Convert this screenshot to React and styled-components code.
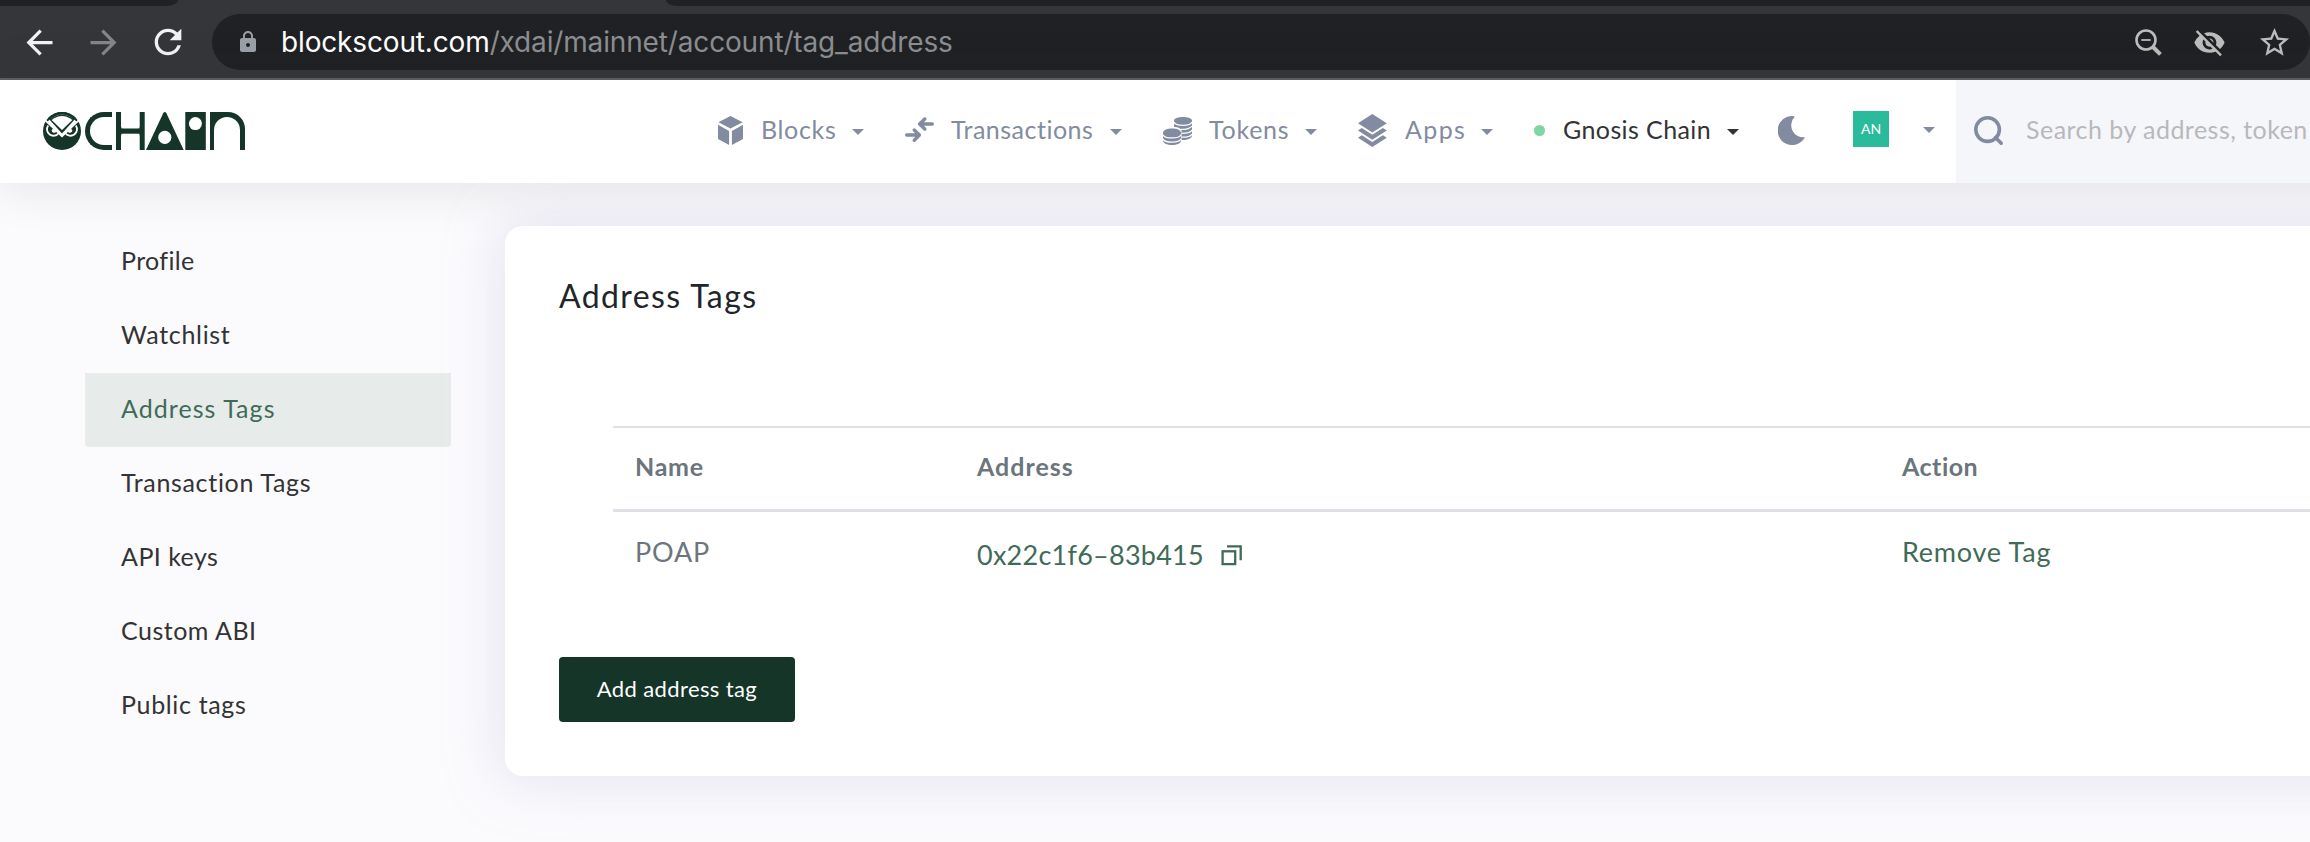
import React from 'react';
import styled, { createGlobalStyle } from 'styled-components';
import {
  MdArrowBack,
  MdArrowForward,
  MdLock,
  MdRefresh,
  MdStarBorder,
  MdVisibilityOff,
} from 'react-icons/md';

const GlobalStyle = createGlobalStyle`
  * { box-sizing: border-box; }
  body {
    margin: 0;
    background: #fbfafd;
    font-family: Lato, "Open Sans", sans-serif;
    overflow: hidden;
  }
`;

const Page = styled.div`
  width: 2310px;
  height: 842px;
  overflow: hidden;
  display: flex;
  flex-direction: column;
`;

/* Browser chrome */

const TabStrip = styled.div`
  height: 6px;
  flex: none;
  display: flex;
  background: #35363a;
`;

const StripLeft = styled.div`
  width: 178px;
  background: #202124;
  border-bottom-right-radius: 11px 6px;
`;

const StripRight = styled.div`
  flex: 1;
  margin-left: 488px;
  background: #202124;
  border-bottom-left-radius: 11px 6px;
`;

const Toolbar = styled.div`
  height: 74px;
  flex: none;
  display: flex;
  align-items: flex-start;
  padding: 8px 0 0 20px;
  background: #35363a;
  border-bottom: 2px solid #5f6064;
`;

const ToolbarButton = styled.div`
  width: 64px;
  height: 56px;
  display: flex;
  align-items: center;
  color: ${(p) => (p.$dim ? '#85868a' : '#f1f3f4')};
`;

const Omnibox = styled.div`
  width: 2098px;
  height: 56px;
  display: flex;
  align-items: center;
  padding: 0 18px 0 24px;
  border-radius: 28px;
  background: #202124;
  color: #bdbdbd;
`;

const LockSlot = styled.span`
  display: flex;
  width: 45px;
  color: #9aa0a6;
`;

const Url = styled.span`
  flex: 1;
  font: 400 28px/56px Inter, sans-serif;
  letter-spacing: -0.15px;
  color: #8c8e91;
`;

const Host = styled.span`
  color: #fff;
`;

const OmniboxActions = styled.span`
  display: flex;
  align-items: center;
  gap: 31px;
`;

const Header = styled.header`
  width: 2370px;
  height: 103px;
  flex: none;
  display: flex;
  position: relative;
  z-index: 1;
  background: #fff;
  box-shadow: 0 0 54px rgba(21, 53, 41, 0.12);
`;

const Brand = styled.div`
  width: 718px;
  flex: none;
  padding: 32px 0 0 43px;
`;

const Nav = styled.nav`
  display: flex;
  flex: none;
  align-items: center;
  padding-bottom: 6px;
`;

const NavItem = styled.div`
  width: ${(p) => p.$width}px;
  padding-right: ${(p) => p.$end}px;
  display: flex;
  align-items: center;
  color: #828ba0;
`;

const NavIcon = styled.span`
  width: ${(p) => p.$width}px;
  flex: none;
  display: flex;
  padding-top: 3px;
`;

const NavLabel = styled.span`
  flex: 1;
  width: 0;
  font-size: 25px;
  line-height: 40px;
  white-space: nowrap;
  letter-spacing: ${(p) => p.$track}px;
  color: ${(p) => (p.$dark ? '#333' : 'inherit')};
`;

const Caret = styled.span`
  width: 0;
  height: 0;
  margin-top: ${(p) => p.$drop ?? 6}px;
  border: 6.5px solid transparent;
  border-bottom: 0;
  border-top-color: ${(p) => (p.$dark ? '#333' : '#828ba0')};
`;

const StatusDot = styled.span`
  width: 11px;
  height: 11px;
  border-radius: 50%;
  background: #80d6a1;
`;

const Avatar = styled.span`
  width: 36px;
  height: 36px;
  margin-right: 34px;
  text-align: center;
  background: #29bb9c;
  color: #fff;
  font-size: 14px;
  line-height: 36px;
  letter-spacing: -0.2px;
`;

const Search = styled.div`
  flex: 1;
  display: flex;
  align-items: center;
  padding: 0 0 6px 18px;
  overflow: hidden;
  background: #f5f6fa;
  color: #828ba0;
`;

const SearchIcon = styled.span`
  width: 52px;
  flex: none;
  display: flex;
  padding-top: 4px;
`;

const Placeholder = styled.span`
  font-size: 25px;
  letter-spacing: 0.47px;
  white-space: nowrap;
  color: #b8b8ba;
`;

/* Wordmark */

const Logo = styled.div`
  width: 203px;
  height: 38px;
  display: flex;
  color: #153529;
`;

const LogoC = styled.span`
  width: 27px;
  height: 38px;
  margin-left: 4px;
  border: 5px solid #153529;
  border-right: 0;
  border-radius: 19px 0 0 19px;
`;

const LogoN = styled.span`
  width: 35px;
  height: 38px;
  margin-left: 4px;
  padding: 5px 5px 0 4px;
  background: #153529;
  border-radius: 0 17px 0 0;

  &::before {
    content: '';
    display: block;
    height: 33px;
    background: #fff;
    border-radius: 13px 13px 0 0;
  }
`;

/* Account area */

const Main = styled.main`
  flex: 1;
  display: flex;
  align-items: flex-start;
  padding-left: 85px;
`;

const Sidebar = styled.ul`
  width: 366px;
  flex: none;
  margin: 42px 0 0;
  padding: 0;
  list-style: none;
`;

const SidebarItem = styled.li`
  height: 74px;
  padding: 0 0 3px 36px;
  border-radius: 0 0 4px 4px;
  font-size: 25px;
  line-height: 71px;
  letter-spacing: ${(p) => p.$track}px;
  background: ${(p) => (p.$active ? '#e7ebea' : 'transparent')};
  color: ${(p) => (p.$active ? '#3f6b59' : '#333')};
`;

const Card = styled.section`
  width: 1900px;
  height: 550px;
  flex: none;
  margin: 43px 0 0 54px;
  padding: 51px 0 0 54px;
  border-radius: 18px;
  background: #fff;
  box-shadow: 0 0 54px rgba(202, 199, 226, 0.5);
`;

const Title = styled.h1`
  margin: 0;
  height: 149px;
  font-size: 32px;
  font-weight: 400;
  line-height: 38px;
  letter-spacing: 1.4px;
  color: #212529;
`;

const Table = styled.div`
  margin-left: 54px;
  display: grid;
  grid-template-rows: 86px 80px;
`;

const Row = styled.div`
  display: grid;
  grid-template-columns: 342px 925px 1fr;
  padding-left: 22px;
`;

const HeadRow = styled(Row)`
  align-items: center;
  padding-bottom: 6px;
  border-top: 2px solid #dee2e6;
  border-bottom: 3px solid #dee2e6;
`;

const BodyRow = styled(Row)`
  align-items: start;
  padding-top: 20px;
`;

const HeadCell = styled.span`
  font-size: 25px;
  font-weight: 700;
  letter-spacing: ${(p) => p.$track}px;
  color: #6c757d;
`;

const Cell = styled.span`
  display: flex;
  align-items: center;
  font-size: 27px;
  line-height: 40px;
  letter-spacing: ${(p) => p.$track}px;
  padding-top: ${(p) => p.$drop ?? 0}px;
  color: ${(p) => (p.$link ? '#3f6b59' : '#6c757d')};

  svg { margin-left: 17px; }
`;

const AddButton = styled.button`
  display: block;
  width: 236px;
  height: 65px;
  margin-top: 65px;
  padding: 0 0 3px;
  border: 0;
  border-radius: 4px;
  background: #153529;
  color: #fff;
  font: 400 22px Lato, sans-serif;
  letter-spacing: 0.38px;
  white-space: nowrap;
`;

function ZoomOutIcon() {
  return (
    <svg width="27" height="27" viewBox="0 0 27 27" fill="none" stroke="currentColor">
      <circle cx="11" cy="11" r="9.5" strokeWidth="2.6" />
      <path d="M6.3 11H15.7" strokeWidth="1.8" />
      <path d="M18 18L25.4 25.4" strokeWidth="4" />
    </svg>
  );
}

function OwlIcon() {
  return (
    <svg width="38" height="38" viewBox="0 0 38 38">
      <circle cx="19" cy="19" r="19" fill="#153529" />
      <path d="M4.5 9.5Q19-5 33.5 9.5L19 25Z" fill="#fff" />
      <path d="M19 0A19 19 0 0 1 32.4 5.6L31 7.4Q19-2.4 7 7.4L5.6 5.6A19 19 0 0 1 19 0Z" fill="#153529" />
      <path d="M6.4 7.6Q19-2 31.6 7.6L19 21.6Z" fill="#153529" />
      <path d="M8.6 8Q19-.2 29.4 8L19 18Z" fill="#fff" />
      <path d="M2.6 8.6L19 24.2L35.4 8.6" fill="none" stroke="#fff" strokeWidth="1.8" />
      <path d="M5.2 13.4A6 6 0 1 0 15.8 21" fill="none" stroke="#fff" strokeWidth="1.8" />
      <path d="M32.8 13.4A6 6 0 1 1 22.2 21" fill="none" stroke="#fff" strokeWidth="1.8" />
      <path d="M10 16.6L13.4 19.6A2.6 2.6 0 0 1 8.6 18.2ZM28 16.6L24.6 19.6A2.6 2.6 0 0 0 29.4 18.2Z" fill="#fff" />
    </svg>
  );
}

function LogoMarks() {
  return (
    <svg width="94" height="38" viewBox="0 0 94 38">
      <g fill="#153529">
        <rect x="4" width="5" height="38" />
        <rect x="27.7" width="5" height="38" />
        <rect x="8" y="16.5" width="21" height="5.2" />
        <path d="M9 14.5q0 2.2 2.2 2.2H9zM27.7 14.5q0 2.2-2.2 2.2h2.2zM9 23.7q0-2.2 2.2-2.2H9zM27.7 23.7q0-2.2-2.2-2.2h2.2z" />
        <path d="M34 38L51.2 1.2Q52.8-1 54.4 1.2L71.7 38Z" />
        <rect x="73.3" width="20.5" height="38" />
      </g>
      <circle cx="52.8" cy="25.3" r="6.6" fill="#fff" />
      <circle cx="83.4" cy="11.6" r="6.5" fill="#fff" />
    </svg>
  );
}

function BlockIcon() {
  return (
    <svg width="25" height="29" viewBox="0 0 25 29" fill="currentColor">
      <path d="M12.5 0L24.6 6.3L12.5 12.6L.4 6.3Z" />
      <path d="M0 8.8L11.1 14.9V29L0 22.9ZM25 8.8L13.9 14.9V29L25 22.9Z" />
    </svg>
  );
}

function TransferIcon() {
  return (
    <svg width="29" height="26" viewBox="0 0 29 26" fill="none" stroke="currentColor" strokeWidth="3.4" strokeLinecap="round" strokeLinejoin="round">
      <path d="M27.3 7H15M19.8 2L14.6 7L19.8 12" />
      <path d="M1.7 18H14M9.2 13L14.4 18L9.2 23.4" />
    </svg>
  );
}

function CoinsIcon() {
  return (
    <svg width="29" height="29" viewBox="0 0 29 29">
      <g fill="currentColor">
        <path d="M11 4.8C11-.2 29-.2 29 4.8V19.5C29 22 25 24 20 24H18.5V14C18 12.5 15 11 11 11Z" />
        <path d="M0 16.8C0 11 18 11 18 16.8V24.4C18 30.4 0 30.4 0 24.4Z" />
      </g>
      <g fill="none" stroke="#fff" strokeWidth="1.3">
        <path d="M11 6C12.5 10.4 27.5 10.4 29 6" />
        <path d="M18 13.4C23 13.6 28 12 29 10M18.6 17.3C23.5 17.3 28 16 29 14M18.6 21.2C23.5 21.2 28 20 29 18" />
        <path d="M0 18.6C1.5 23 16.5 23 18 18.6M0 22.8C1.5 27.2 16.5 27.2 18 22.8" />
      </g>
    </svg>
  );
}

function LayersIcon() {
  return (
    <svg width="29" height="33" viewBox="0 0 29 33" fill="currentColor">
      <path d="M14.3 0L28.8 9.3L14.3 18.6L0 9.3Z" />
      <path d="M0 16.4L3.8 13.9L14.3 20.7L24.9 13.9L28.8 16.4L14.3 25.7Z" />
      <path d="M0 23.8L3.8 21.3L14.3 28.1L24.9 21.3L28.8 23.8L14.3 33Z" />
    </svg>
  );
}

function MoonIcon() {
  return (
    <svg width="28" height="29" viewBox="0 0 28 29" fill="currentColor">
      <path d="M16.8.8A12 12 0 0 0 27 21.2A14.5 14.5 0 1 1 14.4 0Q16 0 16.8.8Z" />
    </svg>
  );
}

function MagnifierIcon() {
  return (
    <svg width="30" height="30" viewBox="0 0 30 30" fill="none" stroke="currentColor" strokeWidth="3.6">
      <circle cx="13.6" cy="13.6" r="11.8" />
      <path d="M21.5 21.5L27.2 27.2" strokeLinecap="round" />
    </svg>
  );
}

function CopyIcon() {
  return (
    <svg width="22" height="21" viewBox="0 0 22 21" fill="none" stroke="currentColor" strokeWidth="2.3">
      <rect x="1.6" y="6.3" width="12.6" height="12.8" />
      <path d="M6 1.3H19.7V15.2" />
    </svg>
  );
}

const NAV = [
  { label: 'Blocks', Icon: BlockIcon, width: 187, icon: 43, track: 0.65 },
  { label: 'Transactions', Icon: TransferIcon, width: 258, icon: 46, track: 0.5 },
  { label: 'Tokens', Icon: CoinsIcon, width: 195, icon: 46, track: 0.75 },
  { label: 'Apps', Icon: LayersIcon, width: 176, icon: 47, track: 1.4 },
];

const SIDEBAR = [
  { label: 'Profile', track: 0.35 },
  { label: 'Watchlist', track: 0.7 },
  { label: 'Address Tags', track: 1.05, active: true },
  { label: 'Transaction Tags', track: 0.68 },
  { label: 'API keys', track: 0.45 },
  { label: 'Custom ABI', track: 0.5 },
  { label: 'Public tags', track: 0.65 },
];

export default function App() {
  return (
    <Page>
      <GlobalStyle />
      <TabStrip>
        <StripLeft />
        <StripRight />
      </TabStrip>
      <Toolbar>
        <ToolbarButton><MdArrowBack size={39} /></ToolbarButton>
        <ToolbarButton $dim><MdArrowForward size={39} /></ToolbarButton>
        <ToolbarButton><MdRefresh size={40} /></ToolbarButton>
        <Omnibox>
          <LockSlot><MdLock size={24} /></LockSlot>
          <Url><Host>blockscout.com</Host>/xdai/mainnet/account/tag_address</Url>
          <OmniboxActions>
            <ZoomOutIcon />
            <MdVisibilityOff size={33} />
            <MdStarBorder size={35} />
          </OmniboxActions>
        </Omnibox>
      </Toolbar>
      <Header>
        <Brand>
          <Logo>
            <OwlIcon />
            <LogoC />
            <LogoMarks />
            <LogoN />
          </Logo>
        </Brand>
        <Nav>
          {NAV.map(({ label, Icon, width, icon, track }) => (
            <NavItem key={label} $width={width} $end={41}>
              <NavIcon $width={icon}><Icon /></NavIcon>
              <NavLabel $track={track}>{label}</NavLabel>
              <Caret />
            </NavItem>
          ))}
          <NavItem $width={244} $end={39}>
            <NavIcon $width={29}><StatusDot /></NavIcon>
            <NavLabel $track={0.4} $dark>Gnosis Chain</NavLabel>
            <Caret $dark />
          </NavItem>
          <NavItem $width={75} $end={0}><NavIcon $width={29}><MoonIcon /></NavIcon></NavItem>
          <NavItem $width={103} $end={20}>
            <Avatar>AN</Avatar>
            <Caret $drop={3} />
          </NavItem>
        </Nav>
        <Search>
          <SearchIcon><MagnifierIcon /></SearchIcon>
          <Placeholder>Search by address, token</Placeholder>
        </Search>
      </Header>
      <Main>
        <Sidebar>
          {SIDEBAR.map(({ label, track, active }) => (
            <SidebarItem key={label} $track={track} $active={active}>{label}</SidebarItem>
          ))}
        </Sidebar>
        <Card>
          <Title>Address Tags</Title>
          <Table>
            <HeadRow>
              <HeadCell $track={0.7}>Name</HeadCell>
              <HeadCell $track={1}>Address</HeadCell>
              <HeadCell $track={0.5}>Action</HeadCell>
            </HeadRow>
            <BodyRow>
              <Cell $track={0.8}>POAP</Cell>
              <Cell $track={0.25} $drop={3} $link>0x22c1f6–83b415<CopyIcon /></Cell>
              <Cell $track={0.75} $link>Remove Tag</Cell>
            </BodyRow>
          </Table>
          <AddButton>Add address tag</AddButton>
        </Card>
      </Main>
    </Page>
  );
}
